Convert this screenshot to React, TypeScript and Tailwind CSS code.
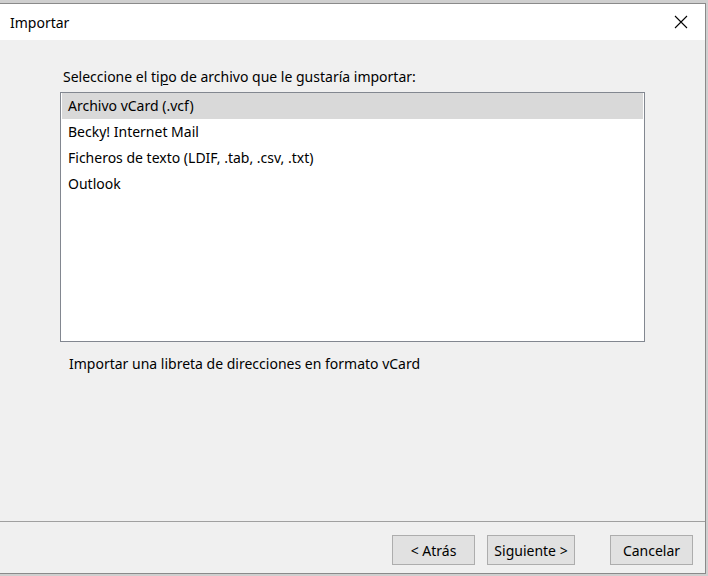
import React from 'react'

const items = [
  'Archivo vCard (.vcf)',
  'Becky! Internet Mail',
  'Ficheros de texto (LDIF, .tab, .csv, .txt)',
  'Outlook',
]

const Btn = ({ label, w }: { label: string; w: string }) => (
  <button className={`${w} h-[30px] border border-[#adadad] bg-[#e1e1e1] text-[14px] text-[#000]`}>
    {label}
  </button>
)

const App = () => {
  return (
    <div className='w-[708px] h-[576px] bg-[#cfcfcf] pt-[3px] overflow-hidden' style={{ fontFamily: '"Noto Sans", "Open Sans", sans-serif' }}>
      <div className='w-[706px] h-[571px] flex flex-col border-t border-r border-b border-[#8a8a8a] bg-[#f0f0f0]'>
        {/* title bar */}
        <div className='h-[36px] bg-white flex items-center justify-between pl-[10px] pr-[17px]'>
          <span className='text-[14px] text-black'>Importar</span>
          <svg width='14' height='14' viewBox='0 0 14 14' className='text-black'>
            <path d='M1 1 L13 13 M13 1 L1 13' stroke='currentColor' strokeWidth='1.1' />
          </svg>
        </div>

        {/* body */}
        <div className='flex-1 flex flex-col pl-[60px] pt-[27px]'>
          <p className='pl-[3px] text-[14px] leading-[20px] text-black'>
            Seleccione el ti<span className='underline underline-offset-2'>p</span>o de archivo que le gustaría importar:
          </p>
          <div className='mt-[5px] w-[585px] h-[250px] border border-[#828790] bg-white'>
            {items.map((t, i) => (
              <div
                key={t}
                className={`h-[26px] flex items-center pb-[2px] text-[14px] text-black ${i === 0 ? 'mx-[1px] pl-[6px] bg-[#d9d9d9]' : 'pl-[7px]'}`}
              >
                {t}
              </div>
            ))}
          </div>
          <p className='mt-[12px] pl-[9px] text-[14px] leading-[20px] text-black'>
            Importar una libreta de direcciones en formato vCard
          </p>
        </div>

        {/* footer */}
        <div className='h-[52px] border-t border-[#a0a0a0] flex items-start pt-[13px] pl-[392px]'>
          <Btn label='< Atrás' w='w-[83px]' />
          <div className='ml-[12px]'>
            <Btn label='Siguiente >' w='w-[88px]' />
          </div>
          <div className='ml-[35px]'>
            <Btn label='Cancelar' w='w-[83px]' />
          </div>
        </div>
      </div>
    </div>
  )
}

export default App
